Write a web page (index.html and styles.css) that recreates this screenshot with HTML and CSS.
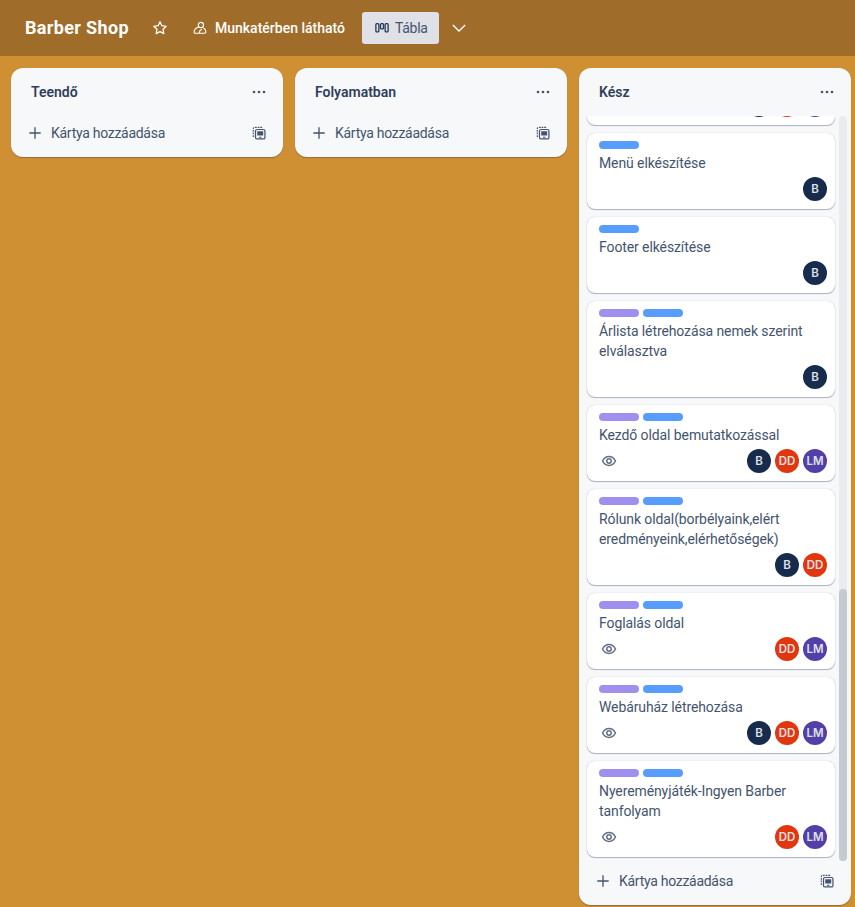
FILE: index.html
```html
<!DOCTYPE html>
<html lang="hu">
<head>
    <meta charset="UTF-8">
    <meta name="viewport" content="width=device-width, initial-scale=1.0">
    <title>Barber Shop</title>
    <link rel="stylesheet" href="styles.css">
</head>
<body>
    <svg class="icon-defs" width="0" height="0">
        <symbol id="i-plus" viewBox="0 0 16 16"><path d="M8 1.500v13M1.500 8h13" fill="none" stroke="currentColor" stroke-width="1.500"/></symbol>
        <symbol id="i-dots" viewBox="0 0 16 16"><circle cx="3" cy="8" r="1.300" fill="currentColor"/><circle cx="8" cy="8" r="1.300" fill="currentColor"/><circle cx="13" cy="8" r="1.300" fill="currentColor"/></symbol>
        <symbol id="i-template" viewBox="0 0 16 16"><path d="M1.500 12.500V3A1.500 1.500 0 0 1 3 1.500h9.500" fill="none" stroke="currentColor" stroke-width="1.300" stroke-dasharray="2 1"/><rect x="4" y="4" width="10.800" height="10.800" rx="1.800" fill="none" stroke="currentColor" stroke-width="1.400"/><path d="M6 6h6.800v4.800H6zM8 12.300h2.800v1H8z" fill="currentColor"/></symbol>
        <symbol id="i-eye" viewBox="0 0 16 16"><path d="M1.500 8C3 5 5.300 3.500 8 3.500S13 5 14.500 8C13 11 10.700 12.500 8 12.500S3 11 1.500 8z" fill="none" stroke="currentColor" stroke-width="1.500"/><circle cx="8" cy="8" r="2.200" fill="none" stroke="currentColor" stroke-width="1.500"/></symbol>
    </svg>

    <header class="topbar">
        <h1 class="board-name">Barber Shop</h1>
        <svg class="star" viewBox="0 0 16 16"><path d="M8 1.800l1.900 3.900 4.300.6-3.100 3 .7 4.300L8 11.600l-3.800 2 .7-4.300-3.100-3 4.300-.6z" fill="none" stroke="currentColor" stroke-width="1.300" stroke-linejoin="round"/></svg>
        <div class="visibility">
            <svg class="people" viewBox="0 0 16 16"><circle cx="9" cy="4.500" r="3" fill="none" stroke="currentColor" stroke-width="1.300"/><path d="M6.500 6.800C3.800 7.500 1.300 10 1.300 13a1 1 0 0 0 1 1h11a1.500 1.500 0 0 0 1.400-1.500c0-2-1-3.800-2.900-4.800M7 14c0-2 1-3.500 3-4.500" fill="none" stroke="currentColor" stroke-width="1.300" stroke-linejoin="round"/></svg>
            <span>Munkatérben látható</span>
        </div>
        <div class="view-btn">
            <svg class="board-icon" viewBox="0 0 16 16"><rect x="1" y="3" width="3.400" height="9.500" rx="1" fill="none" stroke="currentColor" stroke-width="1.500"/><rect x="6.300" y="3" width="3.400" height="6" rx="1" fill="none" stroke="currentColor" stroke-width="1.500"/><rect x="11.600" y="3" width="3.400" height="9.500" rx="1" fill="none" stroke="currentColor" stroke-width="1.500"/></svg>
            <span>Tábla</span>
        </div>
        <svg class="chevron" viewBox="0 0 16 16"><path d="M1 4.500L8 11.500l7-7" fill="none" stroke="currentColor" stroke-width="1.500"/></svg>
    </header>

    <main class="board">
        <section class="list">
            <div class="list-head">
                <h2>Teendő</h2>
                <svg class="dots"><use href="#i-dots"/></svg>
            </div>
            <div class="list-foot">
                <svg class="plus"><use href="#i-plus"/></svg>
                <span class="add-text">Kártya hozzáadása</span>
                <svg class="template"><use href="#i-template"/></svg>
            </div>
        </section>

        <section class="list">
            <div class="list-head">
                <h2>Folyamatban</h2>
                <svg class="dots"><use href="#i-dots"/></svg>
            </div>
            <div class="list-foot">
                <svg class="plus"><use href="#i-plus"/></svg>
                <span class="add-text">Kártya hozzáadása</span>
                <svg class="template"><use href="#i-template"/></svg>
            </div>
        </section>

        <section class="list list-full">
            <div class="list-head">
                <h2>Kész</h2>
                <svg class="dots"><use href="#i-dots"/></svg>
            </div>
            <div class="list-body">
                <div class="cards">
                    <article class="card card-clipped">
                        <div class="card-foot">
                            <span class="avatars"><b class="avatar navy"></b><b class="avatar red"></b><b class="avatar purple"></b></span>
                        </div>
                    </article>
                    <article class="card">
                        <div class="labels"><i class="label blue"></i></div>
                        <p class="card-title">Menü elkészítése</p>
                        <div class="card-foot">
                            <span class="avatars"><b class="avatar navy">B</b></span>
                        </div>
                    </article>
                    <article class="card">
                        <div class="labels"><i class="label blue"></i></div>
                        <p class="card-title">Footer elkészítése</p>
                        <div class="card-foot">
                            <span class="avatars"><b class="avatar navy">B</b></span>
                        </div>
                    </article>
                    <article class="card">
                        <div class="labels"><i class="label violet"></i><i class="label blue"></i></div>
                        <p class="card-title">Árlista létrehozása nemek szerint elválasztva</p>
                        <div class="card-foot">
                            <span class="avatars"><b class="avatar navy">B</b></span>
                        </div>
                    </article>
                    <article class="card">
                        <div class="labels"><i class="label violet"></i><i class="label blue"></i></div>
                        <p class="card-title">Kezdő oldal bemutatkozással</p>
                        <div class="card-foot">
                            <svg class="eye"><use href="#i-eye"/></svg>
                            <span class="avatars"><b class="avatar navy">B</b><b class="avatar red">DD</b><b class="avatar purple">LM</b></span>
                        </div>
                    </article>
                    <article class="card">
                        <div class="labels"><i class="label violet"></i><i class="label blue"></i></div>
                        <p class="card-title">Rólunk oldal(borbélyaink,elért eredményeink,elérhetőségek)</p>
                        <div class="card-foot">
                            <span class="avatars"><b class="avatar navy">B</b><b class="avatar red">DD</b></span>
                        </div>
                    </article>
                    <article class="card">
                        <div class="labels"><i class="label violet"></i><i class="label blue"></i></div>
                        <p class="card-title">Foglalás oldal</p>
                        <div class="card-foot">
                            <svg class="eye"><use href="#i-eye"/></svg>
                            <span class="avatars"><b class="avatar red">DD</b><b class="avatar purple">LM</b></span>
                        </div>
                    </article>
                    <article class="card">
                        <div class="labels"><i class="label violet"></i><i class="label blue"></i></div>
                        <p class="card-title">Webáruház létrehozása</p>
                        <div class="card-foot">
                            <svg class="eye"><use href="#i-eye"/></svg>
                            <span class="avatars"><b class="avatar navy">B</b><b class="avatar red">DD</b><b class="avatar purple">LM</b></span>
                        </div>
                    </article>
                    <article class="card">
                        <div class="labels"><i class="label violet"></i><i class="label blue"></i></div>
                        <p class="card-title">Nyereményjáték-Ingyen Barber tanfolyam</p>
                        <div class="card-foot">
                            <svg class="eye"><use href="#i-eye"/></svg>
                            <span class="avatars"><b class="avatar red">DD</b><b class="avatar purple">LM</b></span>
                        </div>
                    </article>
                </div>
                <div class="scrollbar"><div class="thumb"></div></div>
            </div>
            <div class="list-foot">
                <svg class="plus"><use href="#i-plus"/></svg>
                <span class="add-text">Kártya hozzáadása</span>
                <svg class="template"><use href="#i-template"/></svg>
            </div>
        </section>
    </main>
</body>
</html>
```

FILE: styles.css
```css
* {
    box-sizing: border-box;
}
html, body {
    height: 100%;
}
body {
    margin: 0;
    overflow: hidden;
    display: flex;
    flex-direction: column;
    background-color: #cf8f33;
    color: #44546f;
    font-family: Roboto, Arial, sans-serif;
    font-size: 14px;
}
.icon-defs {
    position: absolute;
}

/* top bar */
.topbar {
    height: 56px;
    flex: none;
    display: flex;
    align-items: center;
    padding-left: 25px;
    background-color: #a06c2a;
    color: #fff;
}
.board-name {
    width: 104px;
    margin: 0;
    font-size: 18px;
    font-weight: 700;
    line-height: 24px;
    letter-spacing: 0.35px;
    white-space: nowrap;
}
.star {
    width: 16px;
    height: 16px;
    margin-left: 23px;
}
.visibility {
    display: flex;
    align-items: center;
    gap: 8px;
    width: 153px;
    margin-left: 25px;
    font-weight: 500;
    white-space: nowrap;
}
.people {
    width: 14px;
    height: 14px;
}
.view-btn {
    display: flex;
    align-items: center;
    gap: 6px;
    width: 77px;
    height: 32px;
    margin-left: 16px;
    padding-left: 13px;
    border-radius: 3px;
    background-color: #dfe1e6;
    color: #44546f;
    letter-spacing: -0.3px;
}
.board-icon {
    width: 14px;
    height: 14px;
    color: #253858;
}
.chevron {
    width: 14px;
    height: 14px;
    margin-left: 13px;
}

/* lists */
.board {
    flex: 1;
    min-height: 0;
    display: flex;
    align-items: flex-start;
    gap: 12px;
    padding: 12px 0 2px 11px;
}
.list {
    width: 272px;
    flex: none;
    display: flex;
    flex-direction: column;
    background-color: #f7f8f9;
    border-radius: 12px;
    box-shadow: 0 1px 1px rgba(9, 30, 66, 0.3);
}
.list-full {
    height: 100%;
}
.list-head {
    height: 48px;
    flex: none;
    display: flex;
    align-items: center;
    justify-content: space-between;
    padding: 0 16px 0 20px;
}
.list-head h2 {
    margin: 0;
    font-size: 14px;
    font-weight: 600;
    color: #2f3f5c;
}
.dots {
    width: 16px;
    height: 16px;
    color: #44546f;
}
.list-foot {
    height: 41px;
    flex: none;
    display: flex;
    align-items: center;
    padding: 0 17px 7px;
}
.plus {
    width: 14px;
    height: 14px;
    flex: none;
}
.add-text {
    flex: 1;
    margin-left: 9px;
    letter-spacing: -0.28px;
}
.template {
    width: 14px;
    height: 14px;
    flex: none;
}

/* done list body, scrolled to the bottom */
.list-body {
    flex: 1;
    min-height: 0;
    display: flex;
    padding-bottom: 3px;
}
.cards {
    width: 260px;
    flex: none;
    overflow: hidden;
    display: flex;
    flex-direction: column;
    justify-content: flex-end;
    gap: 8px;
    padding: 0 4px 4px 8px;
}
.card {
    flex: none;
    padding: 8px 12px;
    background-color: #fff;
    border-radius: 8px;
    box-shadow: 0 1px 1px rgba(9, 30, 66, 0.3), 0 0 1px rgba(9, 30, 66, 0.3);
}
.labels {
    display: flex;
    gap: 4px;
    height: 8px;
}
.label {
    width: 40px;
    height: 8px;
    border-radius: 4px;
}
.label.blue {
    background-color: #579dff;
}
.label.violet {
    background-color: #9f8fef;
}
.card-title {
    margin: 4px 0 0;
    line-height: 20px;
    letter-spacing: -0.1px;
    color: #44546f;
}
.card-foot {
    display: flex;
    align-items: center;
    justify-content: space-between;
    height: 24px;
    margin-top: 4px;
}
.eye {
    width: 16px;
    height: 16px;
    margin-left: 2px;
    color: #626f86;
}
.avatars {
    display: flex;
    gap: 4px;
    margin-left: auto;
    margin-right: -4px;
}
.avatar {
    width: 24px;
    height: 24px;
    border-radius: 50%;
    display: flex;
    align-items: center;
    justify-content: center;
    font-family: Inter, Arial, sans-serif;
    font-size: 11.5px;
    font-weight: 600;
    color: #dfe1e6;
}
.avatar.navy {
    background-color: #172b4d;
}
.avatar.red {
    background-color: #e2360f;
}
.avatar.purple {
    background-color: #5240a8;
}
.scrollbar {
    width: 8px;
    display: flex;
    flex-direction: column;
    justify-content: flex-end;
    border-radius: 4px;
    background-color: #e9ebee;
}
.thumb {
    height: 272px;
    border-radius: 4px;
    background-color: #c5c9d0;
}
```
